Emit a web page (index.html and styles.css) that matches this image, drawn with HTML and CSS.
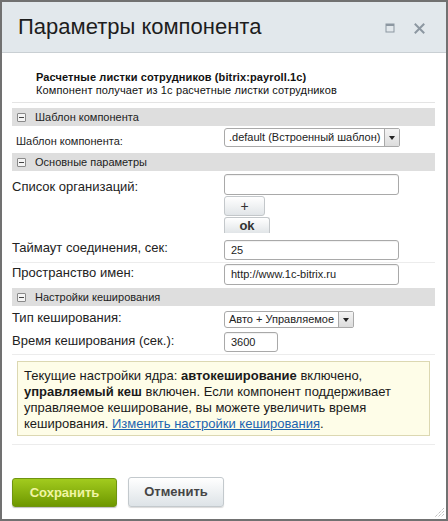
FILE: index.html
```html
<!DOCTYPE html>
<html lang="ru">
<head>
<meta charset="utf-8">
<title>Параметры компонента</title>
<link rel="stylesheet" href="styles.css">
</head>
<body>
<div class="dialog">
  <div class="head">
    <div class="title">Параметры компонента</div>
    <div class="head-icons">
      <svg class="ico" width="10" height="10" viewBox="0 0 10 10"><rect x="1" y="1" width="8" height="8" fill="none" stroke="#8c97a1" stroke-width="1"/><rect x="1" y="1" width="8" height="2" fill="#8c97a1"/></svg>
      <svg class="ico" width="11" height="11" viewBox="0 0 11 11"><path d="M1.5 1.5 L9.5 9.5 M9.5 1.5 L1.5 9.5" stroke="#8c97a1" stroke-width="2" stroke-linecap="square"/></svg>
    </div>
  </div>
  <div class="content">
    <div class="info">
      <div class="info-title">Расчетные листки сотрудников (bitrix:payroll.1c)</div>
      <div class="info-desc">Компонент получает из 1с расчетные листки сотрудников</div>
    </div>

    <div class="section"><span class="minus"></span>Шаблон компонента</div>
    <div class="row row-tpl">
      <div class="label small">Шаблон компонента:</div>
      <div class="value">
        <div class="select sel-tpl"><span class="sel-text">.default (Встроенный шаблон)</span><span class="sel-btn"><span class="tri"></span></span></div>
      </div>
    </div>

    <div class="section"><span class="minus"></span>Основные параметры</div>
    <div class="row row-org">
      <div class="label">Список организаций:</div>
      <div class="value col">
        <div class="input wide"></div>
        <div class="btn btn-plus">+</div>
        <div class="btn btn-ok">ok</div>
      </div>
    </div>
    <div class="row row-timeout line">
      <div class="label">Таймаут соединения, сек:</div>
      <div class="value"><div class="input wide h20">25</div></div>
    </div>
    <div class="row row-ns">
      <div class="label">Пространство имен:</div>
      <div class="value"><div class="input wide">http://www.1c-bitrix.ru</div></div>
    </div>

    <div class="section"><span class="minus"></span>Настройки кеширования</div>
    <div class="row row-type">
      <div class="label">Тип кеширования:</div>
      <div class="value">
        <div class="select sel-type"><span class="sel-text">Авто + Управляемое</span><span class="sel-btn"><span class="tri"></span></span></div>
      </div>
    </div>
    <div class="row row-time line">
      <div class="label">Время кеширования (сек.):</div>
      <div class="value"><div class="input narrow h20">3600</div></div>
    </div>

    <div class="notice">Текущие настройки ядра: <b>автокеширование</b> включено, <b>управляемый кеш</b> включен. Если компонент поддерживает управляемое кеширование, вы можете увеличить время кеширования. <a href="#">Изменить настройки кеширования</a>.</div>
    <div class="sep"></div>

    <div class="footer">
      <div class="fbtn save">Сохранить</div>
      <div class="fbtn cancel">Отменить</div>
    </div>
  </div>
  <svg class="grip" width="12" height="12" viewBox="0 0 12 12"><path d="M11 2 L2 11 M11 5 L5 11 M11 8 L8 11" stroke="#a8a8a8" stroke-width="1" stroke-dasharray="1 1"/></svg>
</div>
</body>
</html>
```
FILE: styles.css
```css
html, body {
  margin: 0;
  padding: 0;
  background: #ffffff;
}
body {
  font-family: "Liberation Sans", Arial, sans-serif;
  color: #222222;
}
.dialog {
  position: relative;
  box-sizing: border-box;
  width: 448px;
  height: 521px;
  border: 2px solid #717171;
  background: #ffffff;
}
.head {
  height: 50px;
  background: #e2e8ec;
  border-bottom: 1px solid #c9cfd3;
  display: flex;
  align-items: center;
  padding-left: 16px;
}
.title {
  font-size: 22px;
  color: #1d1d1d;
  flex: 1;
  margin-top: -1px;
}
.head-icons {
  display: flex;
  align-items: center;
  gap: 19px;
  margin-right: 21px;
  margin-top: 2px;
}
.ico { display: block; }
.content {
  padding: 0 11px 0 10px;
}
.info {
  padding: 18px 0 5px 24px;
  border-bottom: 1px solid #e4e4e4;
  font-size: 11px;
  line-height: 13px;
  color: #111;
  letter-spacing: 0.12px;
}
.info-title { font-weight: bold; }
.section {
  margin-top: 5px;
  height: 18px;
  line-height: 18px;
  background: #dedede;
  font-size: 11px;
  color: #222;
  display: flex;
  align-items: center;
}
.row + .section { margin-top: 0; }
.minus {
  box-sizing: border-box;
  width: 9px;
  height: 9px;
  border: 1px solid #8a8a8a;
  border-radius: 1px;
  background: #f4f4f4;
  margin: 0 9px 0 5px;
  position: relative;
}
.minus::after {
  content: "";
  position: absolute;
  left: 1px;
  right: 1px;
  top: 3px;
  height: 1px;
  background: #444;
}
.row {
  display: flex;
  align-items: flex-start;
}
.row.line { border-bottom: 1px solid #ececec; }
.label {
  width: 212px;
  flex: none;
  font-size: 13px;
  line-height: 16px;
  margin-top: 1px;
}
.label.small {
  font-size: 11px;
  padding-left: 4px;
  width: 208px;
  margin-top: 5px;
}
.value { display: flex; }
.value.col { flex-direction: column; align-items: flex-start; }
.input {
  box-sizing: border-box;
  height: 21px;
  border: 1px solid #a9a9a9;
  border-radius: 3px;
  background: #fff;
  font-size: 11px;
  line-height: 19px;
  padding-left: 6px;
  color: #222;
  box-shadow: inset 0 1px 1px rgba(0,0,0,0.06);
}
.input.h20 { height: 20px; line-height: 18px; }
.input.wide { width: 175px; }
.input.narrow { width: 54px; }
.select {
  box-sizing: border-box;
  display: flex;
  border: 1px solid #a9a9a9;
  border-radius: 3px 2px 2px 3px;
  background: #fff;
  font-size: 11px;
  color: #222;
}
.sel-text { flex: 1; padding-left: 4px; white-space: nowrap; }
.sel-btn {
  box-sizing: border-box;
  width: 15px;
  flex: none;
  border-left: 1px solid #a9a9a9;
  background: linear-gradient(#f4f4f4, #dcdcdc);
  display: flex;
  align-items: center;
  justify-content: center;
}
.tri {
  width: 0; height: 0;
  border-left: 3.5px solid transparent;
  border-right: 3.5px solid transparent;
  border-top: 4px solid #222;
}
.sel-tpl { width: 176px; height: 19px; line-height: 17px; font-size: 11px; }
.sel-type { width: 130px; height: 17px; line-height: 15px; }
.btn {
  box-sizing: border-box;
  border: 1px solid #c3c7ca;
  border-radius: 3px;
  background: linear-gradient(#ffffff, #e1e5e8);
  font-size: 13px;
  font-weight: bold;
  color: #333;
  text-align: center;
}
.btn-plus { width: 41px; height: 20px; line-height: 18px; margin-top: 1px; font-weight: normal; font-size: 14px; }
.btn-ok { width: 46px; height: 16px; line-height: 16px; margin-top: 1px; border-bottom: none; border-radius: 3px 3px 0 0; }
.row-tpl { padding: 2px 0 4px; }
.row-org { padding: 3px 0 6px; }
.row-org .label { margin-top: 5px; }
.row-timeout { padding: 1px 0 2px; }
.row-timeout .label { margin-top: 0; }
.row-ns { padding: 1px 0 3px; }
.row-type { padding: 5px 0 2px; }
.row-type .label { margin-top: -1px; }
.row-time { padding: 2px 0 2px; }
.notice {
  margin: 6px 5px 0 5px;
  padding: 6px 6px 3px 6px;
  background: #fefde8;
  border: 1px solid #dcd8b2;
  font-size: 13px;
  line-height: 16px;
  color: #1a1a1a;
}
.notice a { color: #1c64b0; text-decoration: underline; }
.sep {
  margin-top: 8px;
  border-top: 1px solid #ececec;
}
.footer {
  display: flex;
  gap: 11px;
  margin-top: 32px;
  align-items: flex-start;
}
.fbtn {
  box-sizing: border-box;
  height: 30px;
  line-height: 28px;
  text-align: center;
  font-size: 13px;
  font-weight: bold;
  border-radius: 3px;
}
.save {
  width: 105px;
  margin-top: 1px;
  height: 29px;
  line-height: 27px;
  background: linear-gradient(#a2cb1e, #6e9800);
  border: 1px solid #6f9410;
  color: #f1f5a4;
  box-shadow: 0 1px 1px rgba(0,0,0,0.25);
}
.cancel {
  width: 96px;
  background: linear-gradient(#ffffff, #dde3e7);
  border: 1px solid #c3c9cd;
  color: #454545;
  box-shadow: 0 1px 1px rgba(0,0,0,0.15);
}
.grip {
  position: absolute;
  right: 1px;
  bottom: 1px;
}
```
